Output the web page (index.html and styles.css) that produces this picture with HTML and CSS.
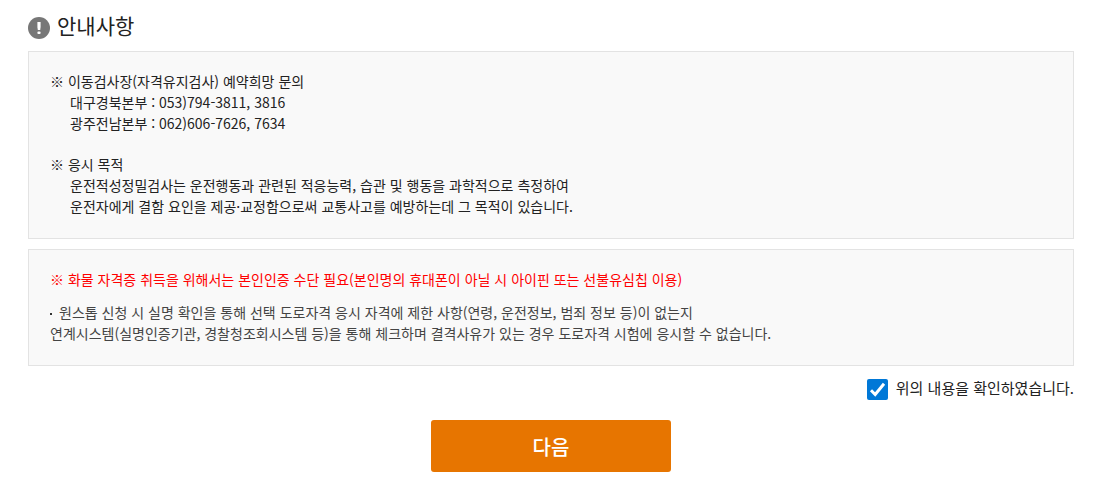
FILE: index.html
```html
<!DOCTYPE html>
<html lang="ko">
<head>
<meta charset="utf-8">
<title>안내사항</title>
<link rel="stylesheet" href="styles.css">
</head>
<body>
<main class="page">
  <h1 class="title">
    <svg class="title-icon" viewBox="0 0 22 22" aria-hidden="true"><circle cx="11" cy="11" r="11" fill="#777"/><path d="M9.4 5h3.2v5l-.4 3h-2.4l-.4-3z" fill="#fff"/><rect x="9.4" y="14.4" width="3.2" height="2.6" rx="1" fill="#fff"/></svg>
    <span>안내사항</span>
  </h1>
  <section class="box">
    <h2 class="head">※ 이동검사장(자격유지검사) 예약희망 문의</h2>
    <p class="detail">대구경북본부 : 053)794-3811, 3816<br>광주전남본부 : 062)606-7626, 7634</p>
    <h2 class="head">※ 응시 목적</h2>
    <p class="detail">운전적성정밀검사는 운전행동과 관련된 적응능력, 습관 및 행동을 과학적으로 측정하여<br>운전자에게 결함 요인을 제공·교정함으로써 교통사고를 예방하는데 그 목적이 있습니다.</p>
  </section>
  <section class="box">
    <p class="warning">※ 화물 자격증 취득을 위해서는 본인인증 수단 필요(본인명의 휴대폰이 아닐 시 아이핀 또는 선불유심칩 이용)</p>
    <p class="note"><span class="bullet"></span>원스톱 신청 시 실명 확인을 통해 선택 도로자격 응시 자격에 제한 사항(연령, 운전정보, 범죄 정보 등)이 없는지<br>연계시스템(실명인증기관, 경찰청조회시스템 등)을 통해 체크하며 결격사유가 있는 경우 도로자격 시험에 응시할 수 없습니다.</p>
  </section>
  <form class="form">
    <div class="agree">
      <span class="check-wrap">
        <input class="check" id="agree" type="checkbox" checked>
        <svg class="tick" viewBox="0 0 21 21" aria-hidden="true"><path d="M4 11.3L8.2 15.5L17 4.8" fill="none" stroke="#fff" stroke-width="3"/></svg>
      </span>
      <label for="agree">위의 내용을 확인하였습니다.</label>
    </div>
    <button class="next" type="button">다음</button>
  </form>
</main>
</body>
</html>
```
FILE: styles.css
```css
* { box-sizing: border-box; }
body {
  margin: 0;
  background: #fff;
  color: #222;
  font: 14px/21px "Noto Sans CJK KR", sans-serif;
}
h1, h2, p { margin: 0; font-weight: 400; }
.page { padding: 12px 35px 28px 28px; }
.title {
  display: flex;
  align-items: flex-end;
  gap: 7px;
  margin-bottom: 12px;
  font-size: 21px;
  line-height: 27px;
}
.title-icon { width: 22px; height: 22px; }
.box {
  margin-bottom: 10px;
  padding: 19px 21px 21px;
  background: #f9f9f9;
  border: 1px solid #e3e3e3;
}
.head { font-size: 14px; }
.detail { padding-left: 20px; }
.detail + .head { margin-top: 20px; }
.warning { margin-bottom: 12px; color: #f00; }
.note { color: #444; }
.bullet {
  display: inline-block;
  width: 2px;
  height: 2px;
  margin-right: 7px;
  vertical-align: middle;
  background: #333;
}
.form { display: flex; flex-direction: column; }
.agree {
  display: flex;
  align-items: flex-end;
  align-self: flex-end;
  gap: 8px;
  font-size: 15px;
  line-height: 24px;
}
.check-wrap {
  display: grid;
  width: 21px;
  height: 21px;
}
.check, .tick {
  grid-area: 1 / 1;
  width: 21px;
  height: 21px;
  margin: 0;
}
.check {
  appearance: none;
  border-radius: 2px;
  background: #0078d7;
}
.tick { pointer-events: none; }
.check:not(:checked) + .tick { visibility: hidden; }
.next {
  align-self: center;
  width: 240px;
  height: 52px;
  margin-top: 20px;
  border: 0;
  border-radius: 3px;
  background: #e77500;
  color: #fff;
  font: inherit;
  font-size: 20px;
  font-weight: 500;
}
```
